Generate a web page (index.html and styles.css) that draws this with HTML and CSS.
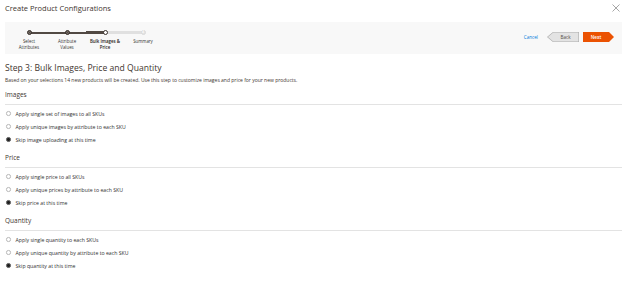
FILE: index.html
```html
<!DOCTYPE html>
<html lang="en">
<head>
<meta charset="utf-8">
<title>Create Product Configurations</title>
<link rel="stylesheet" href="styles.css">
</head>
<body>
<div class="modal">
  <header class="modal-header">
    <h1 class="modal-title">Create Product Configurations</h1>
    <button class="close" aria-label="Close">
      <svg width="8" height="8" viewBox="0 0 8 8"><path d="M0.5 0.5 L7.5 7.5 M7.5 0.5 L0.5 7.5" stroke="#8f8f8f" stroke-width="0.8" fill="none"/></svg>
    </button>
  </header>

  <nav class="wizard-bar">
    <ol class="steps">
      <li class="step done first">
        <div class="track"><span class="dot"></span></div>
        <span class="label">Select<br>Attributes</span>
      </li>
      <li class="step done">
        <div class="track"><span class="dot"></span></div>
        <span class="label">Attribute<br>Values</span>
      </li>
      <li class="step current">
        <div class="track"><span class="dot"></span></div>
        <span class="label">Bulk Images &amp;<br>Price</span>
      </li>
      <li class="step todo last">
        <div class="track"><span class="dot">4</span></div>
        <span class="label">Summary</span>
      </li>
    </ol>
    <div class="actions">
      <a class="cancel" href="#">Cancel</a>
      <span class="btn-back"><span class="btn-back-inner">Back</span></span>
      <span class="btn-next">Next</span>
    </div>
  </nav>

  <main class="content">
    <h2 class="step-title">Step 3: Bulk Images, Price and Quantity</h2>
    <p class="step-desc">Based on your selections 14 new products will be created. Use this step to customize images and price for your new products.</p>

    <section class="group">
      <h3 class="group-title">Images</h3>
      <ul class="options">
        <li class="option"><span class="radio"></span>Apply single set of images to all SKUs</li>
        <li class="option"><span class="radio"></span>Apply unique images by attribute to each SKU</li>
        <li class="option"><span class="radio checked"></span>Skip image uploading at this time</li>
      </ul>
    </section>

    <section class="group">
      <h3 class="group-title">Price</h3>
      <ul class="options">
        <li class="option"><span class="radio"></span>Apply single price to all SKUs</li>
        <li class="option"><span class="radio"></span>Apply unique prices by attribute to each SKU</li>
        <li class="option"><span class="radio checked"></span>Skip price at this time</li>
      </ul>
    </section>

    <section class="group">
      <h3 class="group-title">Quantity</h3>
      <ul class="options">
        <li class="option"><span class="radio"></span>Apply single quantity to each SKUs</li>
        <li class="option"><span class="radio"></span>Apply unique quantity by attribute to each SKU</li>
        <li class="option"><span class="radio checked"></span>Skip quantity at this time</li>
      </ul>
    </section>
  </main>
</div>
</body>
</html>
```

FILE: styles.css
```css
* { box-sizing: border-box; }
html, body { margin: 0; padding: 0; background: #fff; }
body {
  font-family: "Open Sans", "Liberation Sans", sans-serif;
  color: #41362f;
  width: 628px;
  height: 292px;
  overflow: hidden;
}
.modal { padding: 0 6px 0 5px; }

.modal-header {
  height: 22px;
  display: flex;
  justify-content: space-between;
  align-items: flex-start;
}
.modal-title {
  margin: 4px 0 0 0;
  font-size: 7.5px;
  line-height: 9px;
  font-weight: 400;
  color: #41362f;
}
.close {
  border: 0;
  background: none;
  padding: 0;
  margin: 4px 2px 0 0;
  width: 8px;
  height: 8px;
  display: block;
}
.close svg { display: block; }

.wizard-bar {
  height: 32px;
  background: #f8f8f8;
  display: flex;
  justify-content: space-between;
  align-items: flex-start;
  padding: 0 8px 0 5px;
}
.steps {
  list-style: none;
  margin: 0;
  padding: 8px 0 0 0;
  display: flex;
}
.step {
  width: 38px;
  display: flex;
  flex-direction: column;
  align-items: center;
}
.track {
  width: 100%;
  height: 5px;
  display: flex;
  justify-content: center;
  align-items: center;
  background-repeat: no-repeat;
  background-position: center;
  background-size: 100% 2px;
}
.step.done .track { background-image: linear-gradient(to right, #514943 0, #514943 100%); }
.step.done.first .track { background-image: linear-gradient(to right, transparent 50%, #514943 50%); }
.step.current .track { background-image: linear-gradient(to right, #514943 50%, #e0e0e0 50%); background-size: 100% 3px; }
.step.last .track { background-image: linear-gradient(to right, #e0e0e0 50%, transparent 50%); background-size: 100% 3px; }

.dot {
  width: 5px;
  height: 5px;
  border-radius: 50%;
  background: #514943;
  border: 1px solid #3a322d;
  box-shadow: inset 0 0 0 0.8px #7d746e;
  font-size: 2.5px;
  line-height: 3px;
  color: #fff;
  text-align: center;
  font-weight: 700;
}
.step.current .dot {
  background: #fff;
  border: 1.2px solid #3a322d;
  box-shadow: none;
}
.step.todo .dot {
  background: #e3e3e3;
  border: 1px solid #dadada;
  box-shadow: none;
  color: #fff;
}
.label {
  margin-top: 4px;
  font-size: 4.4px;
  line-height: 5.5px;
  text-align: center;
  color: #333;
  white-space: nowrap;
}
.step.current .label { color: #1f1a17; font-weight: 600; }

.actions {
  display: flex;
  align-items: center;
  margin-top: 10px;
}
.cancel {
  font-size: 4.6px;
  line-height: 10px;
  color: #007bdb;
  text-decoration: none;
  margin-right: 9px;
}
.btn-back {
  display: block;
  width: 32px;
  height: 10px;
  background: #adadad;
  clip-path: polygon(6px 0, 100% 0, 100% 100%, 6px 100%, 0 50%);
  margin-right: 4px;
}
.btn-back-inner {
  display: block;
  height: 10px;
  line-height: 10px;
  background: #e3e3e3;
  clip-path: polygon(6.3px 0.6px, calc(100% - 0.6px) 0.6px, calc(100% - 0.6px) calc(100% - 0.6px), 6.3px calc(100% - 0.6px), 0.9px 50%);
  font-size: 4.6px;
  color: #514943;
  text-align: center;
  padding-left: 5px;
}
.btn-next {
  display: block;
  width: 31px;
  height: 10px;
  line-height: 10px;
  background: #eb5202;
  clip-path: polygon(0 0, calc(100% - 5px) 0, 100% 50%, calc(100% - 5px) 100%, 0 100%);
  color: #fff;
  font-size: 4.6px;
  font-weight: 600;
  text-align: center;
  padding-right: 5px;
}

.step-title {
  margin: 11px 0 0 0;
  font-size: 8.6px;
  line-height: 7px;
  font-weight: 400;
  color: #41362f;
}
.step-desc {
  margin: 5px 0 0 0;
  font-size: 5px;
  line-height: 6px;
  color: #41362f;
}
.group-title {
  margin: 8px 0 0 0;
  font-size: 6.5px;
  line-height: 8px;
  font-weight: 400;
  color: #41362f;
  padding-bottom: 5px;
  border-bottom: 1px solid #e3e3e3;
}
.group + .group .group-title { margin-top: 12px; }
.options {
  list-style: none;
  margin: 6px 0 0 0;
  padding: 0;
  display: flex;
  flex-direction: column;
  gap: 8px;
}
.option {
  display: flex;
  align-items: center;
  height: 5px;
  font-size: 5.2px;
  color: #303030;
  padding-left: 1px;
}
.radio {
  width: 4.5px;
  height: 4.5px;
  border-radius: 50%;
  border: 0.6px solid #b8b8b8;
  background: #fff;
  margin-right: 5px;
  flex: none;
}
.radio.checked {
  border-color: #666;
  background: #1f1f1f;
}
```
